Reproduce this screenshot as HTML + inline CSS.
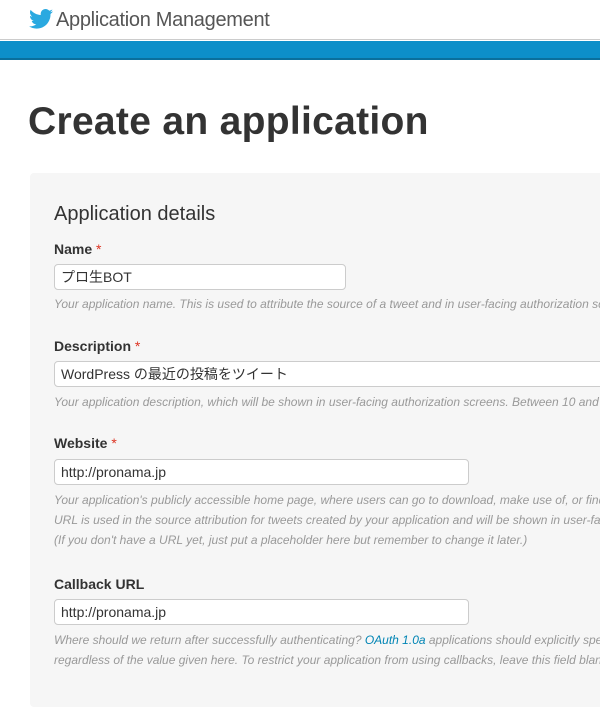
<!DOCTYPE html>
<html><head><meta charset="utf-8"><style>
*{margin:0;padding:0;box-sizing:border-box}
html,body{width:600px;height:719px;overflow:hidden}
body{background:#fff;font-family:"Liberation Sans","Noto Sans CJK JP",sans-serif}
#w{position:relative;width:600px;height:719px;overflow:hidden}
.a{position:absolute;white-space:nowrap}
.hdr{top:0;left:0;width:600px;height:40px;background:#fff;border-bottom:1px solid #ccc}
.bar{top:41px;left:0;width:600px;height:19px;background:#0d8fc9;border-bottom:2px solid #0a6f9c}
.panel{top:173px;left:30px;width:570px;height:534px;background:#f6f6f6;border-radius:4px 0 0 4px}
.lbl{font-size:14px;font-weight:bold;color:#333}
.lbl b{color:#d32;font-weight:normal}
.inp{background:#fff;border:1px solid #ccc;border-radius:4px;height:26px;font-size:14px;color:#333;padding:4px 6px;line-height:17px}
.help{font-size:12px;font-style:italic;color:#999;line-height:20px}
</style></head><body><div id="w">
<div class="a hdr"></div>
<svg class="a" style="left:29px;top:9px" width="24" height="20" viewBox="0 0 24 20"><path fill="#2aa9e0" d="M24 2.4c-.9.4-1.8.6-2.8.8 1-.6 1.8-1.6 2.2-2.7-1 .6-2 1-3.1 1.2C19.3.7 18 0 16.6 0c-2.7 0-4.9 2.2-4.9 4.9 0 .4 0 .8.1 1.1C7.7 5.8 4.1 3.9 1.7.9c-.4.7-.7 1.6-.7 2.5 0 1.7.9 3.2 2.2 4.1-.8 0-1.600-.2-2.2-.6v.1c0 2.4 1.7 4.4 3.900 4.8-.4.1-.8.2-1.3.2-.3 0-.6 0-.9-.1.6 2 2.4 3.4 4.6 3.4-1.7 1.3-3.8 2.1-6.1 2.1-.4 0-.8 0-1.2-.1C2.2 18.8 4.8 19.6 7.5 19.6c9.1 0 14-7.5 14-14v-.6c1-.7 1.8-1.6 2.500-2.600z"/></svg>
<div class="a" style="left:56px;top:9px;font-size:20px;color:#555;letter-spacing:-0.3px">Application Management</div>
<div class="a bar"></div>
<div class="a" style="left:28px;top:100px;font-size:39px;font-weight:bold;color:#333;letter-spacing:0.3px">Create an application</div>
<div class="a panel"></div>
<div class="a" style="left:54px;top:203px;font-size:20px;color:#333">Application details</div>
<div class="a lbl" style="left:54px;top:241px">Name <b>*</b></div>
<div class="a inp" style="left:54px;top:264px;width:292px">プロ生BOT</div>
<div class="a help" style="left:54px;top:294px">Your application name. This is used to attribute the source of a tweet and in user-facing authorization screens.</div>
<div class="a lbl" style="left:54px;top:338px">Description <b>*</b></div>
<div class="a inp" style="left:54px;top:361px;width:560px">WordPress の最近の投稿をツイート</div>
<div class="a help" style="left:54px;top:392px">Your application description, which will be shown in user-facing authorization screens. Between 10 and 200</div>
<div class="a lbl" style="left:54px;top:435px">Website <b>*</b></div>
<div class="a inp" style="left:54px;top:459px;width:415px">http://pronama.jp</div>
<div class="a help" style="left:54px;top:490px">Your application's publicly accessible home page, where users can go to download, make use of, or find<br>URL is used in the source attribution for tweets created by your application and will be shown in user-facing<br>(If you don't have a URL yet, just put a placeholder here but remember to change it later.)</div>
<div class="a lbl" style="left:54px;top:576px">Callback URL</div>
<div class="a inp" style="left:54px;top:599px;width:415px">http://pronama.jp</div>
<div class="a help" style="left:54px;top:630px">Where should we return after successfully authenticating? <span style="color:#0084b4">OAuth 1.0a</span> applications should explicitly specify<br>regardless of the value given here. To restrict your application from using callbacks, leave this field blank.</div>
</div></body></html>
